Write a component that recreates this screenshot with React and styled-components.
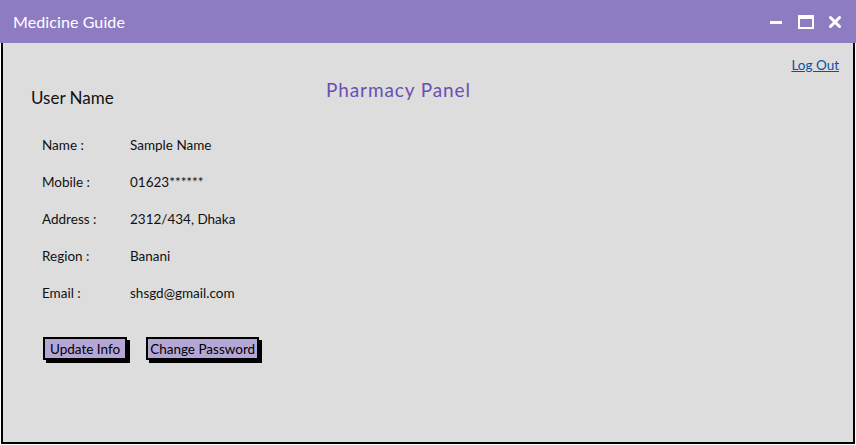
import React from 'react';
import styled, { createGlobalStyle } from 'styled-components';

// cores do mockup
const colors = {
  purple: '#8e7cc3',
  buttonPurple: '#b4a7d6',
  titlePurple: '#6a4fb3',
  panelBg: '#dddddd',
  link: '#0d4f9c',
  text: '#111',
};

const GlobalStyle = createGlobalStyle`
  html, body {
    margin: 0;
    padding: 0;
    background: #ffffff;
  }
  * {
    box-sizing: border-box;
  }
`;

const Window = styled.div`
  width: 856px;
  height: 445px;
  display: flex;
  flex-direction: column;
  font-family: Lato, 'Noto Sans', sans-serif;
  color: ${colors.text};
`;

const TitleBar = styled.div`
  height: 43px;
  flex-shrink: 0;
  background: ${colors.purple};
  display: flex;
  align-items: center;
  padding: 0 15px 0 13px;
  color: #fff;
  font-size: 16px;
`;

const AppName = styled.span`
  flex: 1;
  letter-spacing: 0.1px;
`;

const WindowControls = styled.div`
  display: flex;
  align-items: center;
  gap: 15px;
`;

const Body = styled.div`
  flex: 1;
  margin: 0 1px 1px 1px;
  border: 2px solid #000;
  border-top: none;
  background: ${colors.panelBg};
  padding: 14px 14px 0 28px;
`;

const Header = styled.div`
  display: flex;
  align-items: flex-start;
`;

const UserName = styled.div`
  width: 295px;
  margin-top: 30px;
  font-size: 17px;
`;

const PanelTitle = styled.h1`
  margin: 21px 0 0 0;
  font-size: 19px;
  font-weight: 400;
  letter-spacing: 0.9px;
  color: ${colors.titlePurple};
`;

const LogOut = styled.a`
  margin-left: auto;
  font-size: 13.5px;
  color: ${colors.link};
  text-decoration: underline;
  cursor: pointer;
`;

const InfoList = styled.div`
  display: grid;
  grid-template-columns: 88px auto;
  grid-auto-rows: 37px;
  align-items: center;
  margin: 18px 0 0 11px;
  font-size: 13.5px;
`;

const Label = styled.span``;

const Value = styled.span``;

const Actions = styled.div`
  display: flex;
  gap: 19px;
  margin: 26px 0 0 12px;
`;

const MockButton = styled.button`
  height: 23px;
  padding: 0 ${(p) => p.$pad}px;
  background: ${colors.buttonPurple};
  border: 2px solid #000;
  box-shadow: 3px 3px 0 #000;
  font-family: inherit;
  font-size: 13.5px;
  color: #000;
  cursor: pointer;
`;

const info = [
  ['Name :', 'Sample Name'],
  ['Mobile :', '01623******'],
  ['Address :', '2312/434, Dhaka'],
  ['Region :', 'Banani'],
  ['Email :', 'shsgd@gmail.com'],
];

export default function App() {
  return (
    <>
      <GlobalStyle />
      <Window>
        <TitleBar>
          <AppName>Medicine Guide</AppName>
          <WindowControls>
            <svg width="13" height="14" viewBox="0 0 13 14">
              <rect x="0" y="6" width="12" height="3" fill="#fff" />
            </svg>
            <svg width="16" height="14" viewBox="0 0 16 14">
              <rect x="1" y="1" width="14" height="12" fill="none" stroke="#fff" strokeWidth="2" />
              <rect x="1" y="1" width="14" height="3" fill="#fff" />
            </svg>
            <svg width="12" height="14" viewBox="0 0 12 14">
              <path d="M1.5 2.5 L10.5 11.5 M10.5 2.5 L1.5 11.5" stroke="#fff" strokeWidth="3" strokeLinecap="round" />
            </svg>
          </WindowControls>
        </TitleBar>
        <Body>
          <Header>
            <UserName>User Name</UserName>
            <PanelTitle>Pharmacy Panel</PanelTitle>
            <LogOut>Log Out</LogOut>
          </Header>
          <InfoList>
            {info.map(([label, value]) => (
              <React.Fragment key={label}>
                <Label>{label}</Label>
                <Value>{value}</Value>
              </React.Fragment>
            ))}
          </InfoList>
          <Actions>
            <MockButton $pad={5}>Update Info</MockButton>
            <MockButton $pad={2}>Change Password</MockButton>
          </Actions>
        </Body>
      </Window>
    </>
  );
}
